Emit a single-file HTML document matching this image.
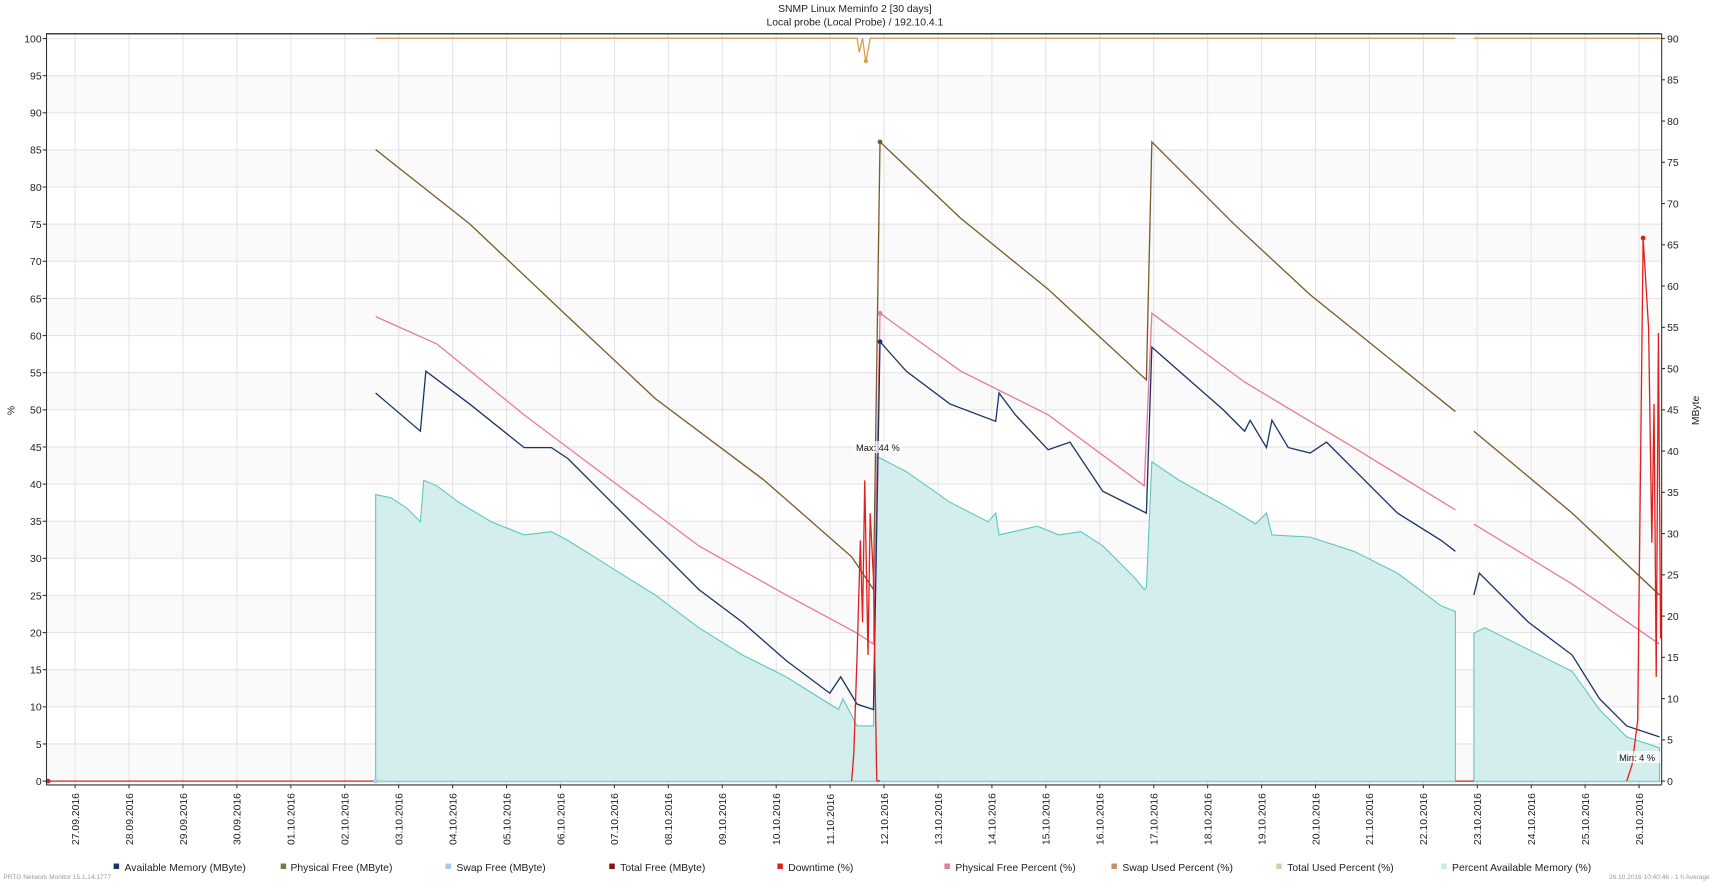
<!DOCTYPE html>
<html><head><meta charset="utf-8"><style>
html,body{margin:0;padding:0;background:#fff;overflow:hidden}
svg{display:block;font-family:"Liberation Sans","DejaVu Sans",sans-serif}
</style></head><body>
<svg width="1712" height="881" viewBox="0 0 1568 807" xmlns="http://www.w3.org/2000/svg">
<rect width="1568" height="807" fill="#fff"/>
<text x="783" y="11" font-size="9.5" text-anchor="middle" fill="#222">SNMP Linux Meminfo 2 [30 days]</text>
<text x="783" y="23.5" font-size="9.5" text-anchor="middle" fill="#222">Local probe (Local Probe) / 192.10.4.1</text>
<g id="bands"></g>
<g id="grid"></g>
<path fill="#d4eded" stroke="#5cc8c0" stroke-width="1" d="M344,716 L344,453 358,456 372,465 385,478 388,440 400,445 420,460 450,478 480,490 505,487 520,495 560,520 600,545 640,575 680,600 720,620 760,645 768,650 772,640 785,665 800,665 803,418 830,432 870,460 905,478 912,470 915,490 950,482 970,490 990,487 1010,500 1040,530 1048,540 1050,538 1055,423 1080,440 1120,462 1150,480 1160,470 1165,490 1200,492 1240,505 1280,525 1320,555 1333,560 1333,716Z"/>
<path fill="#d4eded" stroke="#5cc8c0" stroke-width="1" d="M1350,716 L1350,580 1360,575 1400,595 1440,615 1465,650 1490,675 1520,685 1520,716Z"/>
<line x1="344" y1="715.5" x2="1522" y2="715.5" stroke="#a8cce8" stroke-width="1.2"/>
<polyline fill="none" stroke="#7a5a2a" stroke-width="1.2" points="344,137 430,205 520,290 600,365 700,440 780,510 800,540 806,130 880,200 960,265 1050,348 1055,130 1130,205 1200,270 1333,377"/>
<polyline fill="none" stroke="#7a5a2a" stroke-width="1.2" points="1350,395 1440,470 1520,545"/>
<polyline fill="none" stroke="#e87aa0" stroke-width="1.2" points="344,290 400,315 480,380 560,440 640,500 720,545 785,580 800,590 806,287 880,340 960,380 1048,445 1055,287 1140,350 1240,410 1333,467"/>
<polyline fill="none" stroke="#e87aa0" stroke-width="1.2" points="1350,480 1440,535 1520,590"/>
<polyline fill="none" stroke="#1b3366" stroke-width="1.2" points="344,360 385,395 390,340 430,370 480,410 505,410 520,420 560,460 600,500 640,540 680,570 720,605 760,635 770,620 785,645 800,650 806,313 830,340 870,370 912,386 915,360 930,380 960,412 980,405 1010,450 1040,465 1050,470 1055,318 1080,340 1120,375 1140,395 1145,385 1160,410 1165,385 1180,410 1200,415 1215,405 1240,430 1280,470 1320,495 1333,505"/>
<polyline fill="none" stroke="#1b3366" stroke-width="1.2" points="1350,545 1355,525 1400,570 1440,600 1465,640 1490,665 1520,675"/>
<polyline fill="none" stroke="#d9a050" stroke-width="1.2" points="344,35 785,35 787,48 790,35 793,57 797,35 1333,35"/>
<polyline fill="none" stroke="#d9a050" stroke-width="1.2" points="1350,35 1522,35"/>
<circle cx="793" cy="56" r="2" fill="#d9a050"/>
<polyline fill="none" stroke="#e02020" stroke-width="1.2" points="42,715.5 344,715.5"/>
<polyline fill="none" stroke="#e02020" stroke-width="1.2" points="780,715.5 782,690 785,600 788,495 790,570 792,440 795,600 797,470 800,530 803,715 806,715.5"/>
<polyline fill="none" stroke="#e02020" stroke-width="1.2" points="1333,715.5 1350,715.5"/>
<polyline fill="none" stroke="#e02020" stroke-width="1.2" points="1490,715.5 1495,700 1500,660 1505,218 1510,300 1513,497 1515,370 1517,620 1519,305 1521,585"/>
<circle cx="44" cy="715.5" r="2.2" fill="#e02020"/>
<circle cx="1505" cy="218" r="2.2" fill="#e02020"/>
<circle cx="806" cy="130" r="2.2" fill="#7a5a2a"/>
<circle cx="806" cy="287" r="2.2" fill="#e87aa0"/>
<circle cx="806" cy="313" r="2.2" fill="#1b3366"/>
<circle cx="344" cy="715.5" r="2.2" fill="#a8cce8"/>
<rect x="782" y="404" width="44" height="11" fill="#fff" opacity="0.7"/>
<text x="784" y="413" font-size="8.5" fill="#111">Max: 44 %</text>
<rect x="1481" y="688" width="41" height="11" fill="#fff" opacity="0.7"/>
<text x="1483" y="697" font-size="8.5" fill="#111">Min: 4 %</text>
<line x1="42" y1="31" x2="1522" y2="31" stroke="#000" stroke-width="1"/>
<line x1="42.5" y1="31" x2="42.5" y2="719" stroke="#333" stroke-width="1"/>
<line x1="1522" y1="31" x2="1522" y2="719" stroke="#333" stroke-width="1"/>
<line x1="42" y1="719" x2="1522" y2="719" stroke="#333" stroke-width="1"/>
<g id="labels" font-size="9.5" fill="#222"></g>
<text transform="translate(13,376) rotate(-90)" font-size="9.5" text-anchor="middle" fill="#222">%</text>
<text transform="translate(1556,376) rotate(-90)" font-size="9.5" text-anchor="middle" fill="#222">MByte</text>
<g font-size="9.5" fill="#222">
<rect x="104" y="791" width="5" height="5" fill="#1b3366"/><text x="114" y="798">Available Memory (MByte)</text>
<rect x="257" y="791" width="5" height="5" fill="#7a7a40"/><text x="266" y="798">Physical Free (MByte)</text>
<rect x="408" y="791" width="5" height="5" fill="#a8cce8"/><text x="418" y="798">Swap Free (MByte)</text>
<rect x="558" y="791" width="5" height="5" fill="#8b1010"/><text x="568" y="798">Total Free (MByte)</text>
<rect x="712" y="791" width="5" height="5" fill="#e02020"/><text x="722" y="798">Downtime (%)</text>
<rect x="865" y="791" width="5" height="5" fill="#e87aa0"/><text x="875" y="798">Physical Free Percent (%)</text>
<rect x="1018" y="791" width="5" height="5" fill="#c89060"/><text x="1028" y="798">Swap Used Percent (%)</text>
<rect x="1169" y="791" width="5" height="5" fill="#d8ccaa"/><text x="1179" y="798">Total Used Percent (%)</text>
<rect x="1320" y="791" width="5" height="5" fill="#cde8e8"/><text x="1330" y="798">Percent Available Memory (%)</text>
</g>
<text x="3" y="805" font-size="6" fill="#999">PRTG Network Monitor 15.1.14.1777</text>
<text x="1566" y="805" font-size="6" fill="#999" text-anchor="end">26.10.2016 10:40:46 - 1 h Average</text>
</svg>
<script>
(function(){
var ns="http://www.w3.org/2000/svg";
function el(p,t,a,txt){var e=document.createElementNS(ns,t);for(var k in a)e.setAttribute(k,a[k]);if(txt)e.textContent=txt;document.getElementById(p).appendChild(e);return e;}
function y(v){return 715.5-6.802*v;}
for(var v=0;v<100;v+=5){ if((v/5)%2==0) el("bands","rect",{x:42,y:y(v+5),width:1480,height:y(v)-y(v+5),fill:"#fafafa"}); }
for(var v=0;v<=100;v+=5){ el("grid","line",{x1:42,x2:1522,y1:y(v),y2:y(v),stroke:"#e4e4e4","stroke-width":1});
 el("labels","text",{x:38,y:y(v)+3.5,"text-anchor":"end"},String(v));
 el("labels","line",{x1:39,x2:42,y1:y(v),y2:y(v),stroke:"#333"});}
for(var m=0;m<=90;m+=5){var yy=715.5-m*(680.2/90);
 el("labels","text",{x:1527,y:yy+3.5},String(m));
 el("labels","line",{x1:1522,x2:1525,y1:yy,y2:yy,stroke:"#333"});}
var dates=["27.09.2016","28.09.2016","29.09.2016","30.09.2016","01.10.2016","02.10.2016","03.10.2016","04.10.2016","05.10.2016","06.10.2016","07.10.2016","08.10.2016","09.10.2016","10.10.2016","11.10.2016","12.10.2016","13.10.2016","14.10.2016","15.10.2016","16.10.2016","17.10.2016","18.10.2016","19.10.2016","20.10.2016","21.10.2016","22.10.2016","23.10.2016","24.10.2016","25.10.2016","26.10.2016"];
for(var i=0;i<dates.length;i++){var x=68.7+i*49.4;
 el("grid","line",{x1:x,x2:x,y1:31,y2:719,stroke:"#e4e4e4","stroke-width":1});
 el("labels","line",{x1:x,x2:x,y1:719,y2:722,stroke:"#333"});
 el("labels","text",{transform:"translate("+(x+3.5)+",774) rotate(-90)"},dates[i]);}
})();
</script>
</body></html>
